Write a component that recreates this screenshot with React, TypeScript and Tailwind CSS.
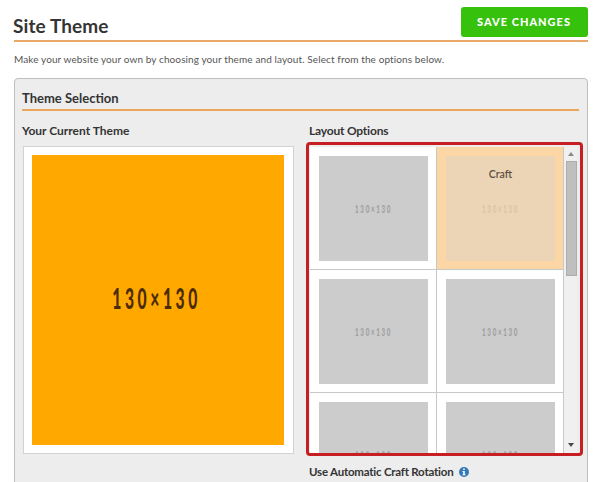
import React from 'react';

function Dimensions({ className }: { className: string }) {
  return (
    <span className={`inline-block whitespace-nowrap font-black ${className}`}>130×130</span>
  );
}

function LayoutTile({ label }: { label?: string }) {
  return (
    <div
      className={`h-[122px] w-[126px] pl-[9px] pt-[9px] ${label ? 'bg-[#fdd6a6]' : 'bg-white'}`}
    >
      <div
        className={`relative flex h-[105px] w-[109px] items-center justify-center ${
          label ? 'bg-[#ecd4b6]' : 'bg-[#cccccc]'
        }`}
      >
        {label && (
          <span className="absolute inset-x-0 top-[11px] text-center text-[10.5px] leading-[14px] font-semibold text-[#5d5042]">
            {label}
          </span>
        )}
        <Dimensions
          className={`scale-x-[.52] text-[12px] leading-[14px] tracking-[3.2px] ${
            label ? 'text-[#dcc4a8]' : 'text-[#a0a0a0]'
          }`}
        />
      </div>
    </div>
  );
}

function Scrollbar() {
  return (
    <div className="flex h-full w-[13px] shrink-0 flex-col items-center bg-[#f0f0f0] pl-px">
      <div className="flex h-[14px] items-center">
        <svg width="6" height="4" viewBox="0 0 6 4">
          <path d="M0 4L3 0L6 4Z" fill="#8a8a8a" />
        </svg>
      </div>
      <div className="h-[115px] w-[11px] border border-[#adadad] bg-[#bfbfbf]" />
      <div className="mt-auto flex h-[17px] items-center">
        <svg width="6" height="4" viewBox="0 0 6 4">
          <path d="M0 0L3 4L6 0Z" fill="#4a4a4a" />
        </svg>
      </div>
    </div>
  );
}

export default function App() {
  return (
    <main className="h-[482px] w-[599px] overflow-hidden bg-white pl-[14px] pr-[11px] pt-[7px] font-['Lato','Liberation_Sans',sans-serif] text-[#343434]">
      <header className="flex h-[35px] justify-between border-b-2 border-[#eaa868]">
        <h1 className="-ml-px pt-[7px] text-[19px] leading-[24px] font-bold tracking-[.1px] whitespace-nowrap">
          Site Theme
        </h1>
        <button className="h-[30px] w-[127px] rounded-[3px] bg-[#35c10c] pr-px text-[11px] font-black tracking-[1px] text-white">
          SAVE CHANGES
        </button>
      </header>
      <p className="mt-[10px] h-[14px] text-[10px] leading-[14px] tracking-[.105px] whitespace-nowrap text-[#555555]">
        Make your website your own by choosing your theme and layout. Select from the options below.
      </p>
      <section className="mt-[12px] h-[430px] rounded-[4px] border border-[#bebebe] bg-[#ededed] px-[8px] pt-[11px]">
        <h2 className="-ml-px h-[21px] border-b-2 border-[#eda75c] text-[13px] leading-[16px] font-bold">
          Theme Selection
        </h2>
        <div className="flex">
          <div className="w-[283px] shrink-0">
            <h3 className="-ml-px mt-[11px] h-[24px] text-[12px] leading-[17px] font-bold">
              Your Current Theme
            </h3>
            <div className="h-[308px] w-[271px] border border-[#d2d2d2] bg-white p-[8px]">
              <div className="flex h-[290px] w-[252px] items-center justify-center bg-[#ffa800]">
                <Dimensions className="mr-[2px] mb-[4px] scale-x-[.55] text-[28.5px] leading-[30px] tracking-[6.5px] text-[#4b2c08]" />
              </div>
            </div>
          </div>
          <div className="shrink-0">
            <h3 className="ml-[3px] mt-[11px] h-[20px] text-[12px] leading-[17px] font-bold tracking-[-.2px]">
              Layout Options
            </h3>
            <div className="h-[314px] w-[277px] rounded-[4px] border-[3px] border-[#c51f24] bg-[#ededed] pl-[1px] pt-[2px]">
              <div className="flex h-[306px] overflow-hidden">
                <div className="grid h-[368px] w-[254px] shrink-0 grid-cols-[126px_126px] gap-px border-r border-[#c8c8c8] bg-[#c8c8c8]">
                  <LayoutTile />
                  <LayoutTile label="Craft" />
                  <LayoutTile />
                  <LayoutTile />
                  <LayoutTile />
                  <LayoutTile />
                </div>
                <Scrollbar />
              </div>
            </div>
            <div className="ml-[3px] mt-[7px] flex items-center gap-[6px]">
              <span className="text-[11.5px] leading-[17px] font-bold tracking-[-.22px] whitespace-nowrap">
                Use Automatic Craft Rotation
              </span>
              <svg width="10" height="10" viewBox="0 0 10 10">
                <circle cx="5" cy="5" r="5" fill="#3579b9" />
                <path d="M4.2 1.5H5.8V3H4.2ZM3.5 4H5.8V7.3H6.5V8.3H3.5V7.3H4.2V5H3.5Z" fill="#fff" />
              </svg>
            </div>
          </div>
        </div>
      </section>
    </main>
  );
}
